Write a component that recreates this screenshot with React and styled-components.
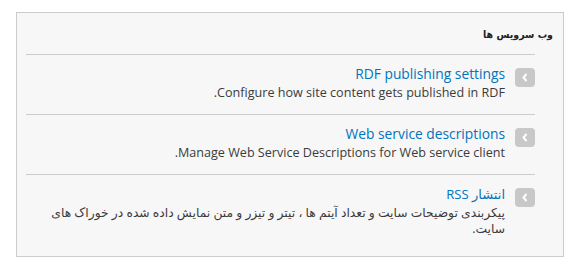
import React from "react";
import styled, { createGlobalStyle } from "styled-components";

const GlobalStyle = createGlobalStyle`
	body {
		margin: 0;
		background: #fff;
		font-family: "Open Sans", "DejaVu Sans", sans-serif;
	}
`;

const Page = styled.div`
	padding: 12px 13px 9px 16px;
	direction: rtl;
`;

const Panel = styled.section`
	background: #f7f7f7;
	border: 1px solid #ccc;
	padding: 0 0 6px 9px;
`;

const PanelTitle = styled.h3`
	margin: 0;
	padding: 13px 10px 12px 0;
	font-family: "DejaVu Sans Condensed", "DejaVu Sans", sans-serif;
	font-size: 10.5px;
	font-weight: bold;
	line-height: 16px;
	color: #222;
`;

const List = styled.ul`
	list-style: none;
	margin: 0 28px 0 0;
	padding: 0;
	border-top: 1px solid #ccc;
`;

const Item = styled.li`
	display: flex;
	align-items: flex-start;
	gap: 10px;
	padding: 10px 0 13px;
	border-bottom: ${(p) => (p.last ? "none" : "1px solid #ccc")};
`;

const Arrow = styled.span`
	flex: none;
	width: 20px;
	height: 19px;
	margin-top: 3px;
	border-radius: 4px;
	background: #c8c8c8;
	display: flex;
	align-items: center;
	justify-content: center;
`;

const Body = styled.div`
	flex: 1;
	min-width: 0;
`;

const ItemLink = styled.a`
	display: block;
	font-size: ${(p) => (p.fa ? "13px" : "13.8px")};
	line-height: 18px;
	color: #0074bd;
	text-decoration: none;
`;

const Description = styled.div`
	margin-top: 2px;
	font-size: ${(p) => (p.fa ? "12.3px" : "12.6px")};
	line-height: 16px;
	color: #3b3b3b;
`;

const items = [
	{
		title: "RDF publishing settings",
		desc: "Configure how site content gets published in RDF.",
	},
	{
		title: "Web service descriptions",
		desc: "Manage Web Service Descriptions for Web service client.",
	},
	{
		title: "انتشار RSS",
		desc: "پیکربندی توضیحات سایت و تعداد آیتم ها ، تیتر و تیزر و متن نمایش داده شده در خوراک های سایت.",
		fa: true,
	},
];

export default function App() {
	return (
		<>
			<GlobalStyle />
			<Page>
				<Panel>
					<PanelTitle>وب سرویس ها</PanelTitle>
					<List>
						{items.map((it, i) => (
							<Item key={i} last={i === items.length - 1}>
								<Arrow>
									<svg width="6" height="9" viewBox="0 0 6 9">
										<path
											d="M4.5 1 L1.5 4.5 L4.5 8"
											fill="none"
											stroke="#fff"
											strokeWidth="2"
										/>
									</svg>
								</Arrow>
								<Body>
									<ItemLink href="#" fa={it.fa}>
										{it.title}
									</ItemLink>
									<Description fa={it.fa}>{it.desc}</Description>
								</Body>
							</Item>
						))}
					</List>
				</Panel>
			</Page>
		</>
	);
}
